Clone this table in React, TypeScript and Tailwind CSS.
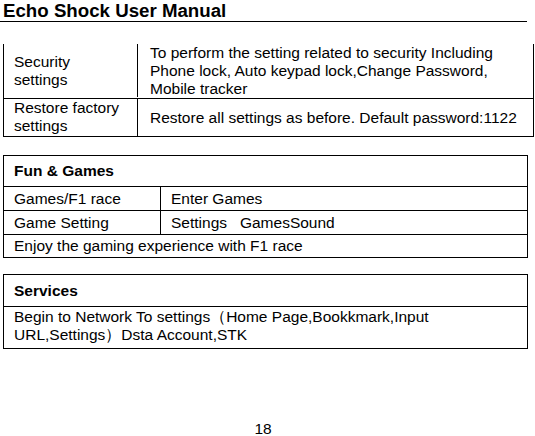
import React from "react";

export default function App() {
  return (
    <div className="w-[535px] h-[436px] bg-white text-black flex flex-col overflow-hidden" style={{ fontFamily: '"Liberation Sans", Arial, sans-serif' }}>
      <div className="pl-[3px] w-[527px] border-b border-black">
        <div className="text-[18.7px] font-bold leading-[21px]">Echo Shock User Manual</div>
      </div>

      {/* Table 1 (continued) */}
      <div className="mt-[22px] ml-[3px] w-[531px] border-x border-b border-black text-[15.5px] leading-[18px]">
        <div className="flex border-b border-black">
          <div className="w-[134px] border-r border-black pl-[10px] flex items-center h-[53px]">
            <span>Security<br />settings</span>
          </div>
          <div className="flex-1 pl-[12px] pr-1">
            To perform the setting related to security Including<br />Phone lock, Auto keypad lock,Change Password,<br />Mobile tracker
          </div>
        </div>
        <div className="flex">
          <div className="w-[134px] border-r border-black pl-[10px] h-[37px]">
            Restore factory<br />settings
          </div>
          <div className="flex-1 pl-[12px] flex items-center whitespace-nowrap">
            Restore all settings as before. Default password:1122
          </div>
        </div>
      </div>

      {/* Fun & Games */}
      <div className="mt-[18px] ml-[3px] w-[525px] border border-black text-[15.5px] leading-[18px]">
        <div className="h-[31px] border-b border-black pl-[10px] flex items-center font-bold">Fun &amp; Games</div>
        <div className="flex h-[24px] border-b border-black">
          <div className="w-[157px] border-r border-black pl-[10px] flex items-center">Games/F1 race</div>
          <div className="flex-1 pl-[10px] flex items-center">Enter Games</div>
        </div>
        <div className="flex h-[24px] border-b border-black">
          <div className="w-[157px] border-r border-black pl-[10px] flex items-center">Game Setting</div>
          <div className="flex-1 pl-[10px] flex items-center whitespace-pre">Settings   GamesSound</div>
        </div>
        <div className="h-[22px] pl-[10px] flex items-center">Enjoy the gaming experience with F1 race</div>
      </div>

      {/* Services */}
      <div className="mt-[16px] ml-[3px] w-[525px] border border-black text-[15.5px] leading-[18px]">
        <div className="h-[32px] border-b border-black pl-[10px] flex items-center font-bold">Services</div>
        <div className="pl-[10px] pt-[1px] h-[41px]">
          Begin to Network To settings（Home Page,Bookkmark,Input<br />URL,Settings）Dsta Account,STK
        </div>
      </div>

      <div className="flex-1" />
      <div className="text-center text-[15.5px] leading-[18px] -mb-[2px] pr-[9px] shrink-0">18</div>
    </div>
  );
}
